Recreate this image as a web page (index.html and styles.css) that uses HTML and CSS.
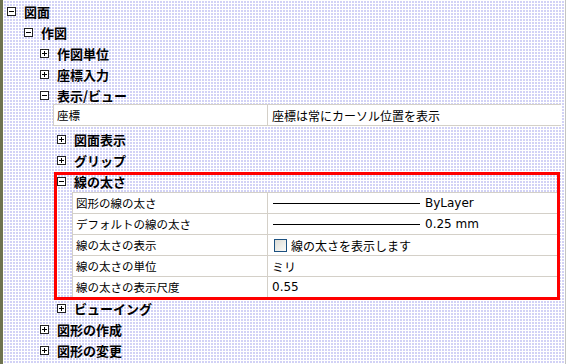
FILE: index.html
```html
<!DOCTYPE html>
<html lang="ja">
<head>
    <meta charset="UTF-8">
    <title>オプション - 図面</title>
    <link rel="stylesheet" href="styles.css">
</head>
<body>
    <div class="pane">
        <div class="node l0"><span class="tog"></span><span class="name">図面</span></div>
        <div class="node l1"><span class="tog"></span><span class="name">作図</span></div>
        <div class="node l2"><span class="tog plus"></span><span class="name">作図単位</span></div>
        <div class="node l2"><span class="tog plus"></span><span class="name">座標入力</span></div>
        <div class="node l2"><span class="tog"></span><span class="name">表示/ビュー</span></div>

        <div class="props single">
            <div class="prop">
                <span class="key">座標</span>
                <span class="val">座標は常にカーソル位置を表示</span>
            </div>
        </div>

        <div class="node l3"><span class="tog plus"></span><span class="name">図面表示</span></div>
        <div class="node l3"><span class="tog plus"></span><span class="name">グリップ</span></div>

        <!-- highlighted group -->
        <div class="group">
            <div class="node"><span class="tog"></span><span class="name">線の太さ</span></div>
            <div class="props">
                <div class="prop">
                    <span class="key">図形の線の太さ</span>
                    <span class="val"><span class="weight"></span><span class="num">ByLayer</span></span>
                </div>
                <div class="prop">
                    <span class="key">デフォルトの線の太さ</span>
                    <span class="val"><span class="weight"></span><span class="num">0.25 mm</span></span>
                </div>
                <div class="prop">
                    <span class="key">線の太さの表示</span>
                    <span class="val"><span class="check"></span>線の太さを表示します</span>
                </div>
                <div class="prop">
                    <span class="key">線の太さの単位</span>
                    <span class="val">ミリ</span>
                </div>
                <div class="prop">
                    <span class="key">線の太さの表示尺度</span>
                    <span class="val"><span class="num">0.55</span></span>
                </div>
            </div>
        </div>

        <div class="node l3"><span class="tog plus"></span><span class="name">ビューイング</span></div>
        <div class="node l2"><span class="tog plus"></span><span class="name">図形の作成</span></div>
        <div class="node l2"><span class="tog plus"></span><span class="name">図形の変更</span></div>
    </div>
</body>
</html>
```

FILE: styles.css
```css
html, body {
    margin: 0;
    height: 100%;
}

body {
    font-family: "Noto Sans CJK JP", "DejaVu Sans", sans-serif;
    color: #000;
    background-color: #d2d2f6;
    background-image:
        linear-gradient(90deg, #6f7450 3px, transparent 3px),
        linear-gradient(90deg, #fff 1px, transparent 1px),
        linear-gradient(#fff 1px, transparent 1px);
    background-size: 100% 100%, 3px 3px, 3px 3px;
    background-repeat: no-repeat, repeat, repeat;
    overflow: hidden;
}

.pane {
    height: 364px;
    box-sizing: border-box;
    padding-top: 1px;
    border-right: 1px solid #c4c4c4;
}

/* tree nodes */
.node {
    display: flex;
    align-items: center;
    height: 21px;
}

.node.l0 { padding-left: 7px; }
.node.l1 { padding-left: 24px; }
.node.l2 { padding-left: 40px; }
.node.l3 { padding-left: 57px; }

.name {
    margin-left: 8px;
    font-size: 13px;
    font-weight: bold;
    white-space: nowrap;
}

.tog {
    position: relative;
    width: 7px;
    height: 7px;
    border: 1px solid #222;
    background: #fff;
    flex-shrink: 0;
}

.tog::before {
    content: "";
    position: absolute;
    left: 1px;
    top: 3px;
    width: 5px;
    height: 1px;
    background: #000;
}

.tog.plus::after {
    content: "";
    position: absolute;
    left: 3px;
    top: 1px;
    width: 1px;
    height: 5px;
    background: #000;
}

/* property grid */
.props {
    background: #fff;
    border-top: 1px solid #d4d0c8;
    border-left: 1px solid #d4d0c8;
}

.props.single {
    margin: -2px 4px 3px 53px;
}

.prop {
    display: grid;
    grid-template-columns: 213px 1fr;
    height: 21px;
    box-sizing: border-box;
    border-bottom: 1px solid #d4d0c8;
    font-size: 12px;
}

.key {
    display: flex;
    align-items: center;
    padding-left: 3px;
    font-size: 11.5px;
    white-space: nowrap;
}

.val {
    display: flex;
    align-items: center;
    padding-left: 4px;
    border-left: 1px solid #d4d0c8;
    white-space: nowrap;
}

.num {
    font-family: "DejaVu Sans", sans-serif;
    font-size: 12px;
}

.weight {
    width: 147px;
    height: 1px;
    margin: 0 5px 0 1px;
    background: #000;
}

.check {
    width: 11px;
    height: 11px;
    margin-right: 4px;
    margin-left: 2px;
    border: 1px solid #1c5180;
    background: linear-gradient(135deg, #dcdcd6, #fbfbf8);
}

/* red annotation round the line weight section */
.group {
    margin: 0 4px -3px 53px;
    padding-bottom: 3px;
    outline: 3px solid #ff0000;
    outline-offset: -4px;
}

.group > .node {
    padding-left: 4px;
}

.group .props {
    margin: 0 4px 0 19px;
}

.group .prop {
    grid-template-columns: 194px 1fr;
}
```
